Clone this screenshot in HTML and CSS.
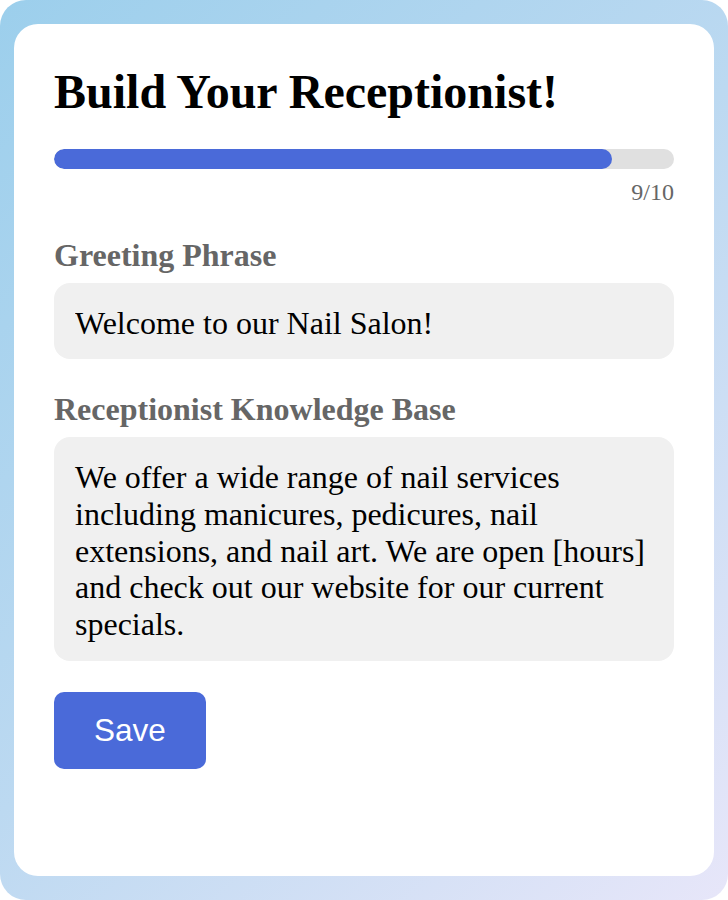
FILE: index.html
```html
<!DOCTYPE html>
<html lang="en">
  <head>
    <meta charset="UTF-8" />
    <meta name="viewport" content="width=device-width, initial-scale=1.0" />
    <title>Build Your Receptionist</title>
    <link rel="stylesheet" href="styles.css">
  </head>
  <body>
    <div class="page">
      <div class="builder-card">
        <h1 class="builder-title">Build Your Receptionist!</h1>
        <div class="progress">
          <div class="progress-track">
            <div class="progress-fill" style="width: 90%"></div>
          </div>
          <div class="progress-label">9/10</div>
        </div>
        <div class="field">
          <label class="field-label" for="greeting">Greeting Phrase</label>
          <input class="field-input" id="greeting" type="text" value="Welcome to our Nail Salon!" />
        </div>
        <div class="field">
          <label class="field-label" for="knowledge">Receptionist Knowledge Base</label>
          <textarea class="field-input field-textarea" id="knowledge">We offer a wide range of nail services including manicures, pedicures, nail extensions, and nail art. We are open [hours] and check out our website for our current specials.</textarea>
        </div>
        <button class="save-btn" id="saveBtn">Save</button>
      </div>
    </div>
  </body>
</html>
```

FILE: styles.css
```css
* {
  margin: 0;
  padding: 0;
  box-sizing: border-box;
}
body {
  font-family: "Liberation Serif", "Times New Roman", serif;
  background: #ffffff;
}
.page {
  width: 728px;
  height: 900px;
  padding: 24px 14px;
  border-radius: 26px;
  background: linear-gradient(135deg, #9ccfec 0%, #bcd9f1 50%, #e7e6f9 100%);
}
.builder-card {
  background: #ffffff;
  border-radius: 24px;
  height: 100%;
  padding: 40px;
}
.builder-title {
  font-size: 48px;
  font-weight: 700;
  line-height: 56px;
  color: #000000;
}
.progress {
  margin-top: 29px;
}
.progress-track {
  height: 20px;
  border-radius: 10px;
  background: #e0e0e0;
  overflow: hidden;
}
.progress-fill {
  height: 100%;
  border-radius: 10px;
  background: #4a6ad9;
}
.progress-label {
  margin-top: 10px;
  text-align: right;
  font-size: 24px;
  line-height: 27px;
  color: #666666;
}
.field {
  margin-top: 31px;
}
.field + .field {
  margin-top: 32px;
}
.field-label {
  display: block;
  font-size: 32px;
  font-weight: 700;
  line-height: 36px;
  color: #666666;
  margin-bottom: 10px;
}
.field-input {
  display: block;
  width: 100%;
  border: none;
  outline: none;
  border-radius: 16px;
  background: #f0f0f0;
  font-family: "Liberation Serif", "Times New Roman", serif;
  font-size: 32px;
  line-height: 37px;
  color: #000000;
  padding: 22px 21px 17px;
  height: 76px;
}
.field-textarea {
  height: 224px;
  padding: 22px 21px 16px;
  line-height: 36.75px;
  resize: none;
  overflow: hidden;
}
.save-btn {
  margin-top: 31px;
  background: #4a6ad9;
  color: #ffffff;
  border: none;
  border-radius: 10px;
  font-family: "Liberation Sans", Arial, sans-serif;
  font-size: 31.5px;
  line-height: 37px;
  padding: 20px 40px;
  cursor: pointer;
}
```
